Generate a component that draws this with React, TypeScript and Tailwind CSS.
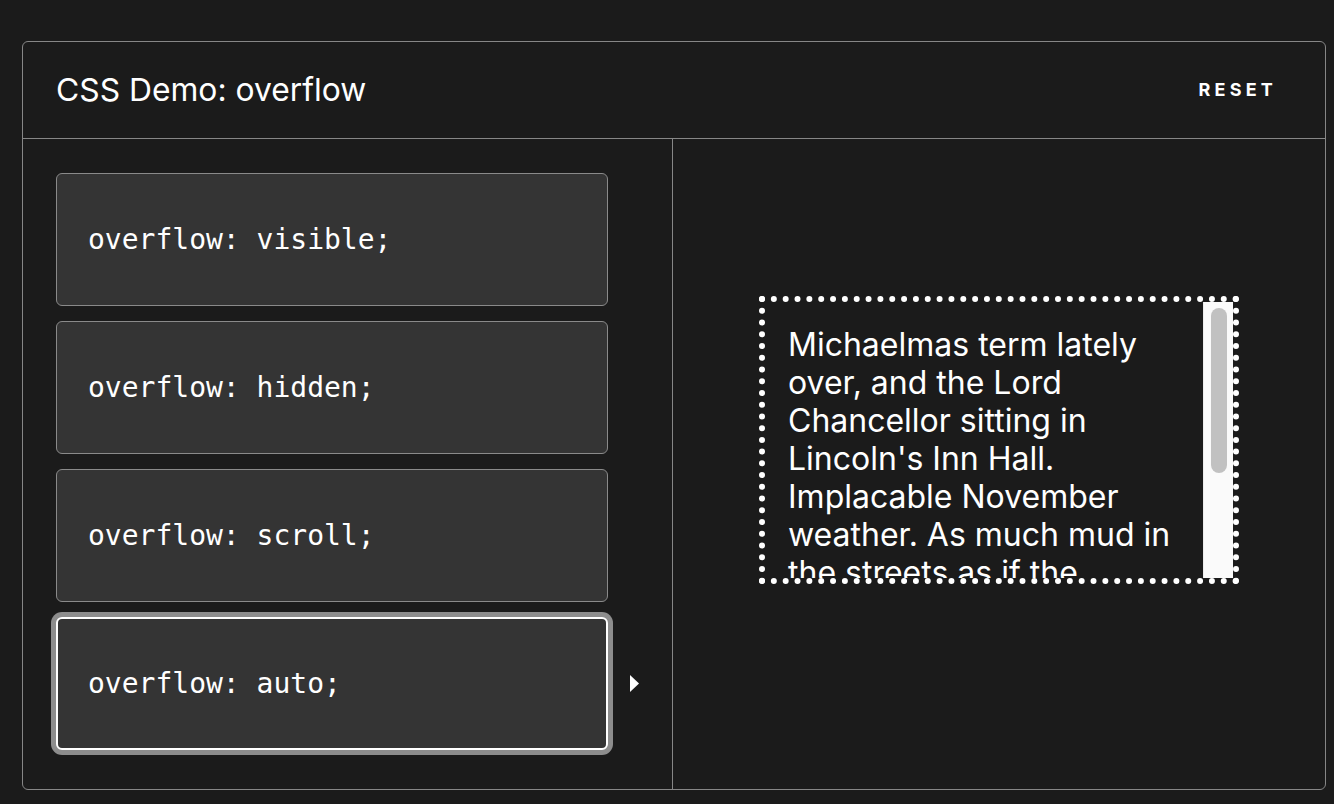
import React from "react";

const choices = [
  "overflow: visible;",
  "overflow: hidden;",
  "overflow: scroll;",
  "overflow: auto;",
];

const text =
  "Michaelmas term lately over, and the Lord Chancellor sitting in Lincoln's Inn Hall. Implacable November weather. As much mud in the streets as if the waters had but newly retired from the face of the earth.";

export default function App() {
  return (
    <div
      className="w-[1334px] h-[804px] bg-[#1b1b1b] pt-[41px] pl-[22px] text-white"
      style={{ fontFamily: "Inter, 'Noto Sans', sans-serif" }}
    >
      <div className="w-[1304px] h-[749px] border border-[#878787] rounded-[6px] flex flex-col">
        <div className="h-[97px] border-b border-[#878787] flex items-center justify-between pl-[33px] pr-[48px]">
          <h1 className="text-[31.8px] leading-none font-normal text-white">CSS Demo: overflow</h1>
          <button className="text-[18px] font-bold tracking-[4.2px] text-white leading-none">RESET</button>
        </div>
        <div className="flex flex-1">
          <div className="w-[650px] border-r border-[#878787] pl-[33px] pt-[34px] flex flex-col gap-[15px]">
            {choices.map((c, i) => {
              const selected = i === 3;
              return (
                <div key={c} className="flex items-center">
                  <div
                    className={
                      selected
                        ? "w-[552px] h-[133px] bg-[#343434] rounded-[6px] border-2 border-white shadow-[0_0_0_5px_#8d8d8d] flex items-center pl-[30px]"
                        : "w-[552px] h-[133px] bg-[#343434] rounded-[6px] border border-[#8a8a8a] flex items-center pl-[31px]"
                    }
                  >
                    <code
                      className="text-[28px] leading-none text-white whitespace-pre"
                      style={{ fontFamily: "'DejaVu Sans Mono', 'Liberation Mono', monospace" }}
                    >
                      {c}
                    </code>
                  </div>
                  {selected && (
                    <svg width="9" height="17" viewBox="0 0 9 17" className="ml-[22px] w-[9px] h-[17px] shrink-0 block">
                      <path d="M0 0 L9 8.5 L0 17 Z" fill="#ffffff" />
                    </svg>
                  )}
                </div>
              );
            })}
          </div>
          <div className="flex-1 flex justify-center items-start pt-[157px]">
            <div className="w-[480px] h-[288px] border-[6px] border-dotted border-white flex">
              <div className="flex-1 h-full overflow-hidden pt-[24px] pl-[23px] pr-[20px] text-[32px] leading-[38px] text-white">
                {text}
              </div>
              <div className="w-[30px] h-full bg-[#fafafa] border-l border-[#ececec] pt-[6px] px-[7px]">
                <div className="w-[16px] h-[165px] rounded-full bg-[#c1c1c1]" />
              </div>
            </div>
          </div>
        </div>
      </div>
    </div>
  );
}
